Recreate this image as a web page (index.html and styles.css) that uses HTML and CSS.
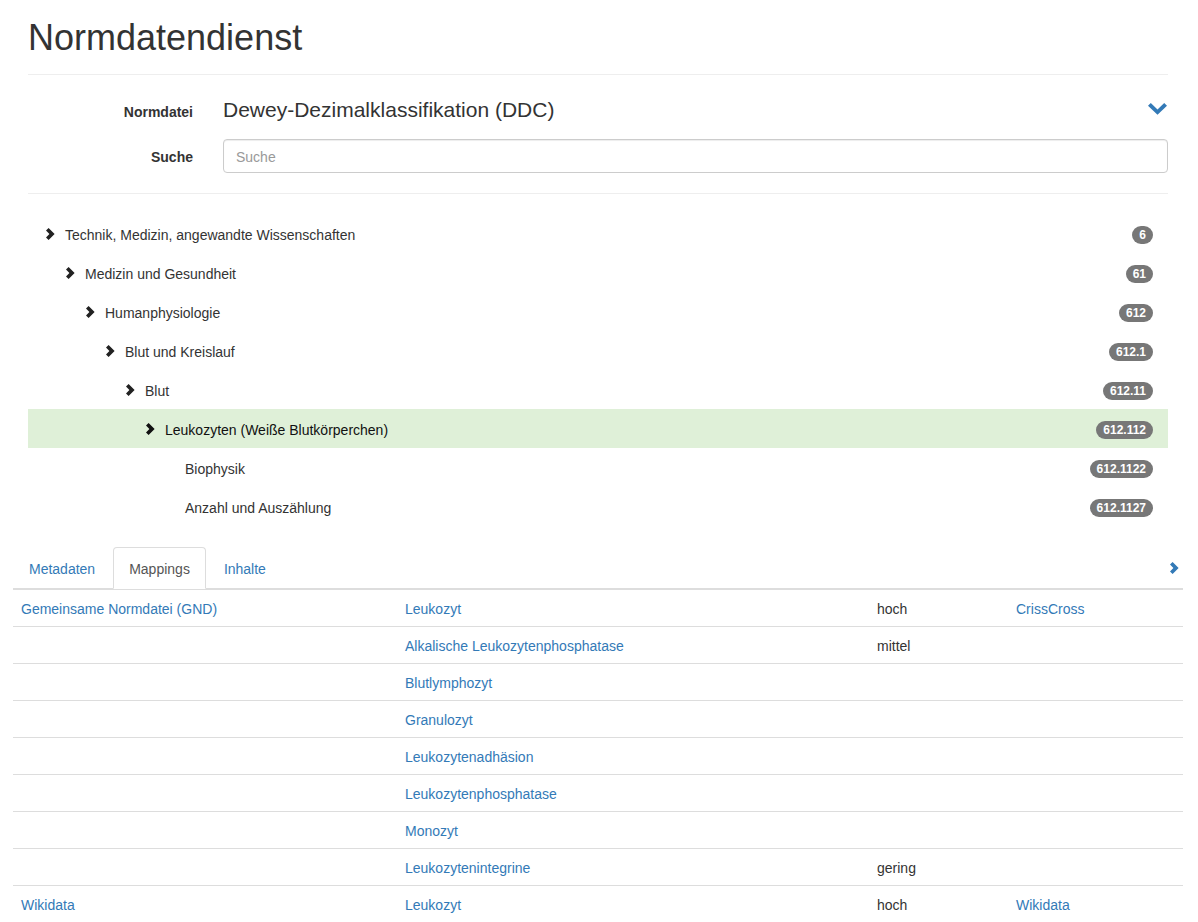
FILE: index.html
```html
<!DOCTYPE html>
<html lang="de">
<head>
<meta charset="utf-8">
<title>Normdatendienst</title>
<link rel="stylesheet" href="styles.css">
</head>
<body>
<div class="container">
  <h1 class="title">Normdatendienst</h1>
  <hr class="rule rule-top">
  <form class="form">
    <div class="form-row form-row-first">
      <label class="form-label">Normdatei</label>
      <div class="form-field field-static">
        <span class="scheme">Dewey-Dezimalklassifikation (DDC)</span>
        <svg class="chev-down" width="19" height="12" viewBox="0 0 19 12"><polygon points="0,2.8 2.8,0 9.5,6.4 16.2,0 19,2.8 9.5,11.8" fill="#337ab7"/></svg>
      </div>
    </div>
    <div class="form-row form-row-search">
      <label class="form-label">Suche</label>
      <div class="form-field">
        <input class="input" type="text" placeholder="Suche">
      </div>
    </div>
  </form>
  <hr class="rule rule-bottom">

  <ul class="tree">
    <li class="tree-row lvl-0"><span class="node"><svg class="chev" width="9" height="12" viewBox="0 0 9 12"><polygon points="0,2.6 2.6,0 8.6,6 2.6,12 0,9.4 3.4,6" fill="#222"/></svg>Technik, Medizin, angewandte Wissenschaften</span><span class="badge">6</span></li>
    <li class="tree-row lvl-1"><span class="node"><svg class="chev" width="9" height="12" viewBox="0 0 9 12"><polygon points="0,2.6 2.6,0 8.6,6 2.6,12 0,9.4 3.4,6" fill="#222"/></svg>Medizin und Gesundheit</span><span class="badge">61</span></li>
    <li class="tree-row lvl-2"><span class="node"><svg class="chev" width="9" height="12" viewBox="0 0 9 12"><polygon points="0,2.6 2.6,0 8.6,6 2.6,12 0,9.4 3.4,6" fill="#222"/></svg>Humanphysiologie</span><span class="badge">612</span></li>
    <li class="tree-row lvl-3"><span class="node"><svg class="chev" width="9" height="12" viewBox="0 0 9 12"><polygon points="0,2.6 2.6,0 8.6,6 2.6,12 0,9.4 3.4,6" fill="#222"/></svg>Blut und Kreislauf</span><span class="badge">612.1</span></li>
    <li class="tree-row lvl-4"><span class="node"><svg class="chev" width="9" height="12" viewBox="0 0 9 12"><polygon points="0,2.6 2.6,0 8.6,6 2.6,12 0,9.4 3.4,6" fill="#222"/></svg>Blut</span><span class="badge">612.11</span></li>
    <li class="tree-row lvl-5 active"><span class="node"><svg class="chev" width="9" height="12" viewBox="0 0 9 12"><polygon points="0,2.6 2.6,0 8.6,6 2.6,12 0,9.4 3.4,6" fill="#111"/></svg>Leukozyten (Weiße Blutkörperchen)</span><span class="badge">612.112</span></li>
    <li class="tree-row lvl-6"><span class="node leaf">Biophysik</span><span class="badge">612.1122</span></li>
    <li class="tree-row lvl-6"><span class="node leaf">Anzahl und Auszählung</span><span class="badge">612.1127</span></li>
  </ul>
</div>

<div class="wide">
  <div class="tabs">
    <ul class="tab-list">
      <li class="tab"><a href="#">Metadaten</a></li>
      <li class="tab tab-active"><a href="#">Mappings</a></li>
      <li class="tab"><a href="#">Inhalte</a></li>
    </ul>
    <svg class="chev-right" width="9" height="12" viewBox="0 0 9 12"><polygon points="0,2.6 2.6,0 8.6,6 2.6,12 0,9.4 3.4,6" fill="#337ab7"/></svg>
  </div>
  <table class="mappings">
    <colgroup><col class="c1"><col class="c2"><col class="c3"><col class="c4"></colgroup>
    <tbody>
      <tr><td><a href="#">Gemeinsame Normdatei (GND)</a></td><td><a href="#">Leukozyt</a></td><td>hoch</td><td><a href="#">CrissCross</a></td></tr>
      <tr><td></td><td><a href="#">Alkalische Leukozytenphosphatase</a></td><td>mittel</td><td></td></tr>
      <tr><td></td><td><a href="#">Blutlymphozyt</a></td><td></td><td></td></tr>
      <tr><td></td><td><a href="#">Granulozyt</a></td><td></td><td></td></tr>
      <tr><td></td><td><a href="#">Leukozytenadhäsion</a></td><td></td><td></td></tr>
      <tr><td></td><td><a href="#">Leukozytenphosphatase</a></td><td></td><td></td></tr>
      <tr><td></td><td><a href="#">Monozyt</a></td><td></td><td></td></tr>
      <tr><td></td><td><a href="#">Leukozytenintegrine</a></td><td>gering</td><td></td></tr>
      <tr><td><a href="#">Wikidata</a></td><td><a href="#">Leukozyt</a></td><td>hoch</td><td><a href="#">Wikidata</a></td></tr>
    </tbody>
  </table>
</div>
</body>
</html>
```
FILE: styles.css
```css
* { box-sizing: border-box; }
html, body { margin: 0; padding: 0; }
body {
  font-family: "Liberation Sans", Arial, sans-serif;
  font-size: 14px;
  line-height: 20px;
  color: #333;
  background: #fff;
}
a { color: #337ab7; text-decoration: none; }

.container {
  width: 1170px;
  padding: 0 15px;
  margin: 0 0 0 13px;
}
.title {
  margin: 18px 0 0;
  font-size: 36px;
  line-height: 40px;
  font-weight: normal;
  color: #333;
}
.rule {
  border: 0;
  border-top: 1px solid #eee;
  margin: 0;
  height: 0;
}
.rule-top { margin-top: 16px; }
.rule-bottom { margin-top: 20px; }

.form { margin: 0 -15px; padding-top: 20px; }
.form-row {
  display: flex;
  align-items: baseline;
}
.form-row-first { margin-bottom: 12px; }
.form-label {
  width: 195px;
  padding-right: 15px;
  text-align: right;
  font-weight: bold;
  line-height: 30px;
}
.form-field {
  flex: 1;
  padding: 0 15px;
}
.field-static {
  display: flex;
  align-items: center;
  justify-content: space-between;
  height: 30px;
}
.scheme {
  font-size: 21px;
  line-height: 30px;
}
.chev-down { margin-right: 1px; margin-top: -3px; }
.form-row-search { align-items: flex-start; }
.form-row-search .form-label {
  height: 34px;
  line-height: 32px;
  padding-top: 2px;
}
.input {
  display: block;
  width: 100%;
  height: 34px;
  padding: 7px 12px 5px;
  font-family: inherit;
  font-size: 14px;
  color: #555;
  border: 1px solid #ccc;
  border-radius: 4px;
  box-shadow: inset 0 1px 1px rgba(0,0,0,.075);
  outline: none;
}
.input::placeholder { color: #999; }

.tree {
  list-style: none;
  margin: 20px 0 0;
  padding: 0;
}
.tree-row {
  display: flex;
  align-items: center;
  justify-content: space-between;
  height: 39px;
  padding: 2px 15px 0 19px;
}
.tree-row.active { background: #dff0d8; color: #111; }
.node { display: flex; align-items: center; }
.chev { margin-right: 10px; flex: none; margin-left: -1px; margin-top: -1px; }
.leaf { padding-left: 18px; }
.lvl-1 .node { margin-left: 20px; }
.lvl-2 .node { margin-left: 40px; }
.lvl-3 .node { margin-left: 60px; }
.lvl-4 .node { margin-left: 80px; }
.lvl-5 .node { margin-left: 100px; }
.lvl-6 .node { margin-left: 120px; }
.badge {
  display: inline-block;
  min-width: 10px;
  padding: 3px 7px;
  font-size: 12px;
  font-weight: bold;
  line-height: 12px;
  color: #fff;
  background: #777;
  border-radius: 10px;
  text-align: center;
}

.wide {
  width: 1170px;
  margin: 21px 0 0 13px;
}
.tabs {
  display: flex;
  align-items: center;
  border-bottom: 1px solid #ddd;
  height: 42px;
}
.tab-list {
  list-style: none;
  margin: 0;
  padding: 0;
  display: flex;
  align-self: flex-end;
  margin-bottom: -1px;
}
.tab { margin-right: 2px; }
.tab a {
  display: block;
  padding: 11px 15px 9px;
  line-height: 20px;
  border: 1px solid transparent;
  border-radius: 4px 4px 0 0;
}
.tab-active a {
  color: #555;
  background: #fff;
  border-color: #ddd #ddd transparent;
}
.chev-right { margin-left: auto; margin-right: 4px; }

.mappings {
  width: 100%;
  border-collapse: collapse;
  table-layout: fixed;
}
.c1 { width: 384px; }
.c2 { width: 472px; }
.c3 { width: 139px; }
.c4 { width: 175px; }
.mappings td {
  padding: 9px 8px 7px;
  line-height: 20px;
  border-top: 1px solid #ddd;
  vertical-align: top;
}
```
